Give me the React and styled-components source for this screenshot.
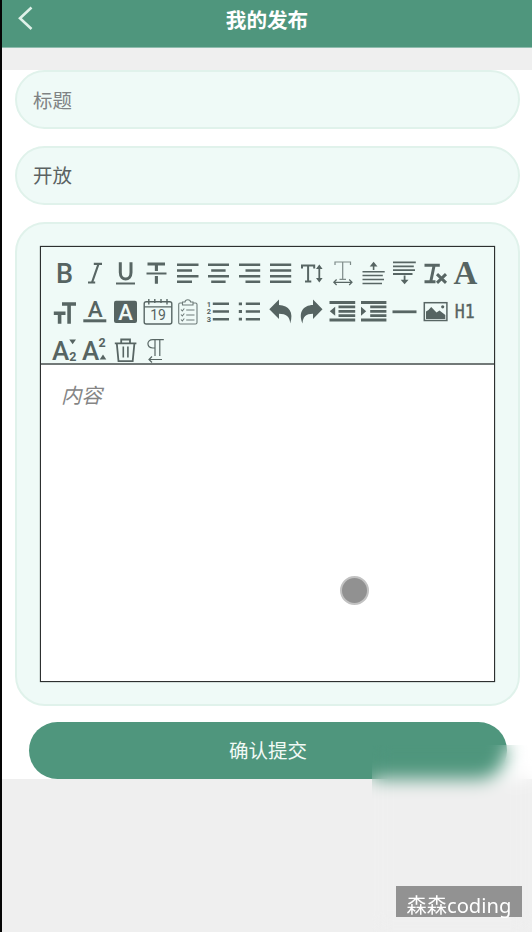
import React from "react";
import styled, { createGlobalStyle } from "styled-components";

const GlobalStyle = createGlobalStyle`
  *, *::before, *::after { box-sizing: border-box; }
  body {
    margin: 0;
    background: #efefef;
    font-family: "Noto Sans CJK SC", sans-serif;
  }
`;

const Screen = styled.div`
  position: relative;
  width: 532px;
  height: 932px;
  border-left: 2px solid #050505;
  background: #efefef;
  overflow: hidden;
`;

const Header = styled.header`
  height: 48px;
  display: grid;
  grid-template-columns: 60px 1fr 60px;
  padding-bottom: 10px;
  align-items: center;
  background: #4f967d;
  border-bottom: 1px solid #8fbcae;
  color: #fff;
`;

const BackButton = styled.button`
  display: flex;
  padding: 0 0 2px 14px;
  border: 0;
  background: none;
  color: #dff1e9;
`;

const Title = styled.h1`
  margin: 0;
  text-align: center;
  font-size: 20.6px;
  line-height: 28px;
  font-weight: 700;
`;

const Form = styled.form`
  margin-top: 22px;
  padding: 0 12px 0 13px;
  height: 709px;
  background: #fff;
  display: flex;
  flex-direction: column;
`;

const Field = styled.div`
  height: 59px;
  flex: none;
  display: flex;
  align-items: center;
  margin-bottom: 17px;
  padding: 0 16px ${(p) => (p.$filled ? 2 : 0)}px;
  border: 2px solid #e0f2eb;
  border-radius: 30px;
  background: #effaf7;
  font-size: 19.5px;
  color: ${(p) => (p.$filled ? "#5b6262" : "#7f8384")};
`;

const EditorCard = styled.section`
  height: 484px;
  flex: none;
  padding: 22px 23px;
  border: 2px solid #e0f2eb;
  border-radius: 30px;
  background: #effaf7;
`;

const Editor = styled.div`
  height: 436px;
  display: flex;
  flex-direction: column;
  border: 1.5px solid #2d3030;
  box-shadow: 0 0 1px #4a5050;
`;

const Toolbar = styled.div`
  height: 118px;
  flex: none;
  padding: 5.5px 0 0 7.5px;
  display: grid;
  grid-template-columns: repeat(14, 30.93px);
  grid-auto-rows: 39px;
  overflow: hidden;
  border-bottom: 2px solid #727978;
`;

const Tool = styled.svg`
  width: 31px;
  height: 39px;
  overflow: visible;
  fill: none;
  stroke: #586664;
  stroke-width: ${(p) => p.$weight || 2.4};
  color: #566462;

  text {
    fill: currentColor;
    stroke: none;
    text-anchor: middle;
    font-family: Roboto, sans-serif;
  }
  .solid { fill: currentColor; stroke: none; }
  .serif { font-family: "Liberation Serif", serif; }
`;

const Content = styled.div`
  flex: 1;
  padding: 14px 20px;
  background: #fff;
  color: #858585;
  font-size: 20.5px;
  line-height: 30px;
  font-style: italic;
`;

const Submit = styled.button`
  height: 57px;
  flex: none;
  margin: 16px 13px 0 14px;
  padding: 0 0 2px;
  border: 0;
  border-radius: 29px;
  background: #4f967d;
  color: #f2faf6;
  font: 400 19.5px "Noto Sans CJK SC", sans-serif;
`;

const TouchPoint = styled.div`
  position: absolute;
  left: 338px;
  top: 576px;
  width: 29px;
  height: 29px;
  border: 2.5px solid #c2c2c2;
  border-radius: 50%;
  background: #919191;
  filter: blur(0.6px);
`;

const Haze = styled.div`
  position: absolute;
  left: 370px;
  top: 745px;
  right: 0;
  bottom: 0;
  backdrop-filter: blur(9px);
`;

const Watermark = styled.div`
  position: absolute;
  left: 394px;
  top: 886px;
  width: 126px;
  height: 31px;
  background: #929292;
  color: #fff;
  text-align: center;
  white-space: nowrap;
  font: 20.2px/39px "Noto Sans", "Noto Sans CJK SC", sans-serif;
`;

const tools = [
  { name: "bold", art: <text x="15.4" y="30.1" fontSize="27" fontWeight="500">B</text> },
  { name: "italic", art: <path d="M14.8 10.8H23M9 29.5H16.2M19.5 11L13 29.5" strokeWidth="2.2" /> },
  { name: "underline", art: <><path d="M10.3 9.3V19.5C10.3 28.2 21 28.2 21 19.5V9.3" strokeWidth="3" /><path d="M6 30.5H25" strokeWidth="2" /></> },
  { name: "strike", art: <><path d="M6.5 11H24M15.4 11V18M15.4 23V30.8" strokeWidth="3.1" /><path d="M5.5 20.5H25.5" strokeWidth="2" /></> },
  { name: "left", art: <path d="M5 11.8H26.5M5 17.5H20M5 23.2H26.5M5 28.8H20" /> },
  { name: "center", art: <path d="M5 11.8H26M8.2 17.5H22.6M5 23.2H26M8.2 28.8H22.6" /> },
  { name: "right", art: <path d="M5 11.8H26.2M11.5 17.5H26.2M5 23.2H26.2M11.5 28.8H26.2" /> },
  { name: "justify", art: <path d="M5 11.8H26.2M5 17.5H26.2M5 23.2H26.2M5 28.8H26.2" /> },
  { name: "line-height", art: <><path d="M6 15.5V12.6H18.2V15.5M12.1 12.6V28.6M9 28.6H15.3" strokeWidth="2" /><path d="M23.3 14V27" strokeWidth="1.8" /><path className="solid" d="M20 16L23.3 11.5L26.6 16ZM20 25L23.3 29.5L26.6 25Z" /></> },
  { name: "letter-spacing", weight: 1.2, art: <><path d="M8 12V9H23.5V12M15.7 9V26M12.5 26.3H19" opacity=".75" /><path d="M7 29.3H24.8M9.6 26.5L6.8 29.3L9.6 32M22.2 26.5L25 29.3L22.2 32" /></> },
  { name: "space-before", weight: 1.6, art: <><path d="M4.5 18.8H26.7M4.5 22.5H24.8M4.5 26.5H26M4.5 30.5H24M15.6 10.5V17" /><path className="solid" d="M11.7 13.4L15.6 8.8L19.5 13.4Z" /></> },
  { name: "space-after", weight: 1.8, art: <><path d="M4 9.3H26.8M4 13.3H24.8M4 17.2H26M4 21H23.5M15.6 22.5V29" /><path className="solid" d="M11.7 26.7L15.6 31.3L19.5 26.7Z" /></> },
  { name: "clear-format", weight: 3, art: <path d="M4.5 12.2H19.8M4.5 28.8H15.5M14.2 12L10.8 28.5M17 21.2L26 29.8M26 21.2L17 29.8" /> },
  { name: "font", art: <text className="serif" x="15.5" y="31.2" fontSize="33" fontWeight="700">A</text> },

  { name: "font-size", art: <path d="M13 12H27M20.1 12V31.8M4.8 21.2H16.5M10.6 21.2V31.8" strokeWidth="3.6" /> },
  { name: "font-color", art: <><text x="16.2" y="24.5" fontSize="22.5" fontWeight="500">A</text><path d="M4.3 28.8H27.3" strokeWidth="3" /></> },
  { name: "background", art: <><rect className="solid" x="4" y="8.7" width="23" height="22.3" rx="2" /><text x="15.5" y="28.2" fontSize="22" fontWeight="500" style={{ fill: "#effaf7" }}>A</text></> },
  { name: "date", weight: 1.4, art: <><rect x="3.2" y="9.7" width="27.6" height="22.3" rx="2" /><path d="M3.2 14.9H30.8M7.8 7V12.5M13.8 7V11M20 7V11M26 7V12.5" /><text x="17.1" y="28.4" fontSize="14">19</text></> },
  { name: "checklist", weight: 1.1, art: <g opacity=".85"><path d="M10.5 11H8Q6.7 11 6.7 12.5V30.5Q6.7 32 8 32H23.5Q25 32 25 30.5V12.5Q25 11 23.5 11H21M10.5 13V10H13Q13.2 7.8 15.8 7.8Q18.4 7.8 18.6 10H21V13Z" /><path d="M9 17.5L10.3 19L12.3 16.5M14.2 18H22.5M9 22.5L10.3 24L12.3 21.5M14.2 23H22.5M9 27.5L10.3 29L12.3 26.5M14.2 28H22.5" /></g> },
  { name: "ordered-list", art: <><path d="M9.8 11.8H26M9.8 19.5H26M9.8 27.2H26" /><text x="6" y="14.5" fontSize="7.5" fontWeight="700">1</text><text x="6" y="22.2" fontSize="7.5" fontWeight="700">2</text><text x="6" y="29.9" fontSize="7.5" fontWeight="700">3</text></> },
  { name: "bullet-list", art: <><path d="M11.8 11.8H26M11.8 19.5H26M11.8 27.2H26" /><path d="M4.8 11.8H8M4.8 19.5H8M4.8 27.2H8" strokeWidth="2.8" /></> },
  { name: "undo", art: <path className="solid" d="M4.3 17.2L14 7.5V13C24 13.2 29 20.5 25.2 31.5C24.8 24.5 21 21.8 14 21.8V27Z" /> },
  { name: "redo", art: <path className="solid" d="M26.5 17.2L17 7.5V13C7 13.2 2 20.5 6.5 31.5C7 24.5 10 21.8 17 21.8V27Z" /> },
  { name: "outdent", art: <><path d="M2.5 10.5H28.2M2.5 28H28.2" strokeWidth="3" /><path d="M11.5 14.9H28.2M11.5 19.3H28.2M11.5 23.7H28.2" strokeWidth="2.7" /><path className="solid" d="M8.2 14.8V23.8L2.8 19.3Z" /></> },
  { name: "indent", art: <><path d="M3 10.5H28.4M3 28H28.4" strokeWidth="3" /><path d="M12.2 14.9H28.4M12.2 19.3H28.4M12.2 23.7H28.4" strokeWidth="2.7" /><path className="solid" d="M3 14.8V23.8L8.2 19.3Z" /></> },
  { name: "divider", art: <path d="M3.5 19.8H27.5" strokeWidth="2.8" /> },
  { name: "image", weight: 1.5, art: <><rect x="4.3" y="10.7" width="22.6" height="17.8" /><path className="solid" d="M6 27V19.5L8.5 18L11.2 15L16.5 20.5L19.5 18.5L25.3 23V27Z" /><circle className="solid" cx="22.7" cy="14.8" r="1.6" /></> },
  { name: "heading", art: <text fontSize="20" x="0" y="0" transform="translate(14.7 26) scale(.83 1)" style={{ fontFamily: "DejaVu Sans Mono", stroke: "currentColor", strokeWidth: 0.4 }}>H1</text> },

  { name: "subscript", art: <><text x="11.7" y="28.5" fontSize="26" fontWeight="500">A</text><text x="23.8" y="30" fontSize="12.5" fontWeight="700">2</text><path className="solid" d="M20.3 8.5H27L23.6 13.3Z" /></> },
  { name: "superscript", art: <><text x="11.7" y="28.5" fontSize="26" fontWeight="500">A</text><text x="23.2" y="16.3" fontSize="12.5" fontWeight="700">2</text><path className="solid" d="M20.7 28.5H27.3L24 23.5Z" /></> },
  { name: "delete", weight: 1.8, art: <><path d="M4.8 12.3H26.4M11.2 12V8.5H20V12M6.8 12.5L8.5 30.2H22.7L24.4 12.5" /><path d="M13.3 15.5V26.5M17.9 15.5V26.5" strokeWidth="1.6" /></> },
  { name: "direction", weight: 1.2, art: <path d="M22.8 8.7H11.8C5.3 8.7 5.3 17 11.8 17H14M14 8.7V25M18.8 8.7V25M8 28.5H21M11 25.5L8 28.5L11 31.5" /> },
];

export default function App() {
  return (
    <>
      <GlobalStyle />
      <Screen>
        <Header>
          <BackButton aria-label="返回">
            <svg width="18" height="24" viewBox="0 0 18 24" fill="none" stroke="currentColor" strokeWidth="2.6">
              <path d="M15.5 1.5L4 12.2L15.5 23" />
            </svg>
          </BackButton>
          <Title>我的发布</Title>
        </Header>
        <Form>
          <Field>标题</Field>
          <Field $filled>开放</Field>
          <EditorCard>
            <Editor>
              <Toolbar>
                {tools.map(({ name, weight, art }) => (
                  <Tool key={name} viewBox="0 0 31 39" $weight={weight}>{art}</Tool>
                ))}
              </Toolbar>
              <Content>内容</Content>
            </Editor>
          </EditorCard>
          <Submit type="button">确认提交</Submit>
        </Form>
        <TouchPoint />
        <Haze />
        <Watermark>森森coding</Watermark>
      </Screen>
    </>
  );
}
